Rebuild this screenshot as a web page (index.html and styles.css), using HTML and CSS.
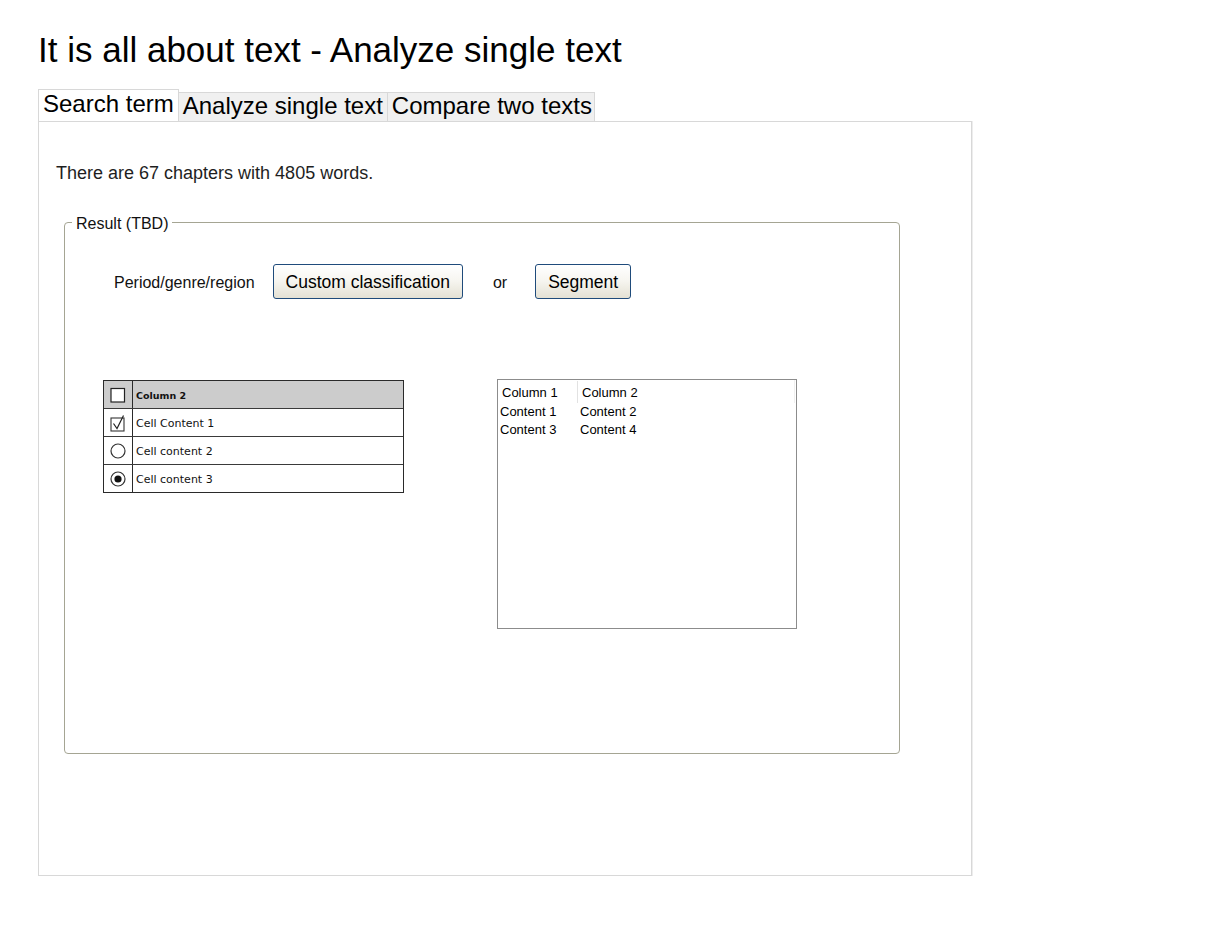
FILE: index.html
```html
<!DOCTYPE html>
<html>
<head>
<meta charset="utf-8">
<title>It is all about text</title>
<link rel="stylesheet" href="styles.css">
</head>
<body>
<div class="page">
  <h1 class="title">It is all about text - Analyze single text</h1>
  <div class="tabs">
    <div class="tab active">Search term</div>
    <div class="tab">Analyze single text</div>
    <div class="tab">Compare two texts</div>
  </div>
  <div class="panel">
    <p class="summary">There are 67 chapters with 4805 words.</p>
    <fieldset class="result">
      <legend class="result-legend">Result (TBD)</legend>
      <div class="controls">
        <span class="label">Period/genre/region</span>
        <button class="btn">Custom classification</button>
        <span class="or">or</span>
        <button class="btn">Segment</button>
      </div>
      <div class="tables">
        <div class="sketch">
          <div class="srow shead">
            <div class="sicon">
              <svg width="18" height="18" viewBox="0 0 18 18"><rect x="2" y="2.5" width="13.5" height="13.5" fill="#fff" stroke="#222" stroke-width="1.2"/></svg>
            </div>
            <div class="stext bold">Column 2</div>
          </div>
          <div class="srow">
            <div class="sicon">
              <svg width="18" height="20" viewBox="0 0 18 20"><rect x="2" y="5" width="13" height="13" fill="#fff" stroke="#333" stroke-width="1.1"/><path d="M4.5 10.5 L8 15.5 L14.5 2.5" fill="none" stroke="#222" stroke-width="1.2"/></svg>
            </div>
            <div class="stext">Cell Content 1</div>
          </div>
          <div class="srow">
            <div class="sicon">
              <svg width="18" height="18" viewBox="0 0 18 18"><circle cx="9" cy="9" r="7" fill="#fff" stroke="#333" stroke-width="1.2"/></svg>
            </div>
            <div class="stext">Cell content 2</div>
          </div>
          <div class="srow slast">
            <div class="sicon">
              <svg width="18" height="18" viewBox="0 0 18 18"><circle cx="9" cy="9" r="7" fill="#fff" stroke="#333" stroke-width="1.2"/><circle cx="9" cy="9" r="3.6" fill="#111"/></svg>
            </div>
            <div class="stext">Cell content 3</div>
          </div>
        </div>
        <div class="list">
          <div class="lhead">
            <div class="lhcell first">Column 1</div>
            <div class="lhcell">Column 2</div>
          </div>
          <div class="lrow">
            <div class="lcell first">Content 1</div>
            <div class="lcell">Content 2</div>
          </div>
          <div class="lrow">
            <div class="lcell first">Content 3</div>
            <div class="lcell">Content 4</div>
          </div>
        </div>
      </div>
    </fieldset>
  </div>
</div>
</body>
</html>
```
FILE: styles.css
```css
html, body {
  margin: 0;
  padding: 0;
  background: #fff;
}
body {
  font-family: "Liberation Sans", Arial, sans-serif;
  color: #000;
}
.page {
  padding: 30px 0 0 38px;
}
.title {
  margin: 0;
  font-size: 35px;
  line-height: 40px;
  font-weight: normal;
}
.tabs {
  display: flex;
  align-items: flex-end;
  margin-top: 19px;
  height: 32px;
}
.tab {
  font-size: 24px;
  line-height: 26px;
  padding: 0 4px 2px 4px;
  border: 1px solid #d8d8d8;
  border-bottom: none;
  background: #f0f0f0;
  margin-left: -1px;
}
.tab:last-child {
  padding-right: 2px;
}
.tab.active {
  margin-left: 0;
  background: #fff;
  line-height: 28px;
  padding-bottom: 3px;
}
.panel {
  box-sizing: border-box;
  width: 934px;
  height: 755px;
  border: 1px solid #d8d8d8;
  box-shadow: 1px 0 0 #ededed;
  padding: 41px 0 0 17px;
}
.summary {
  margin: 0;
  font-size: 18px;
  line-height: 21px;
  color: #1e1e1e;
}
.result {
  box-sizing: border-box;
  margin: 27px 0 0 8px;
  width: 836px;
  height: 543px;
  padding: 0;
  border: 1px solid #a5a593;
  border-radius: 4px;
  min-inline-size: 0;
}
.result-legend {
  margin-left: 7px;
  padding: 4px 4px 0 4px;
  font-size: 16px;
  line-height: 18px;
  color: #111;
}
.controls {
  display: flex;
  align-items: center;
  height: 35px;
  margin-top: 31px;
  padding-left: 49px;
  font-size: 16px;
  color: #111;
}
.label {
  margin-right: 18px;
  padding-top: 2px;
}
.btn {
  height: 35px;
  padding: 2px 12px 0 12px;
  font-family: "Liberation Sans", Arial, sans-serif;
  font-size: 17.5px;
  color: #000;
  border: 1px solid #1f4b7b;
  border-radius: 3px;
  background: linear-gradient(#ffffff, #f7f6f1 45%, #e4e1d4);
}
.or {
  margin: 0 28px 0 30px;
  padding-top: 2px;
}
.tables {
  display: flex;
  align-items: flex-start;
  margin-top: 80px;
  padding-left: 38px;
  gap: 93px;
}
.sketch {
  width: 301px;
  margin-top: 1px;
  border: 1px solid #2a2a2a;
  box-sizing: border-box;
  font-family: "DejaVu Sans", sans-serif;
  font-size: 11px;
  color: #111;
}
.srow {
  display: grid;
  grid-template-columns: 29px 1fr;
  height: 27px;
  border-bottom: 1px solid #3a3a3a;
}
.srow.slast {
  border-bottom: none;
}
.shead {
  background: #cccccc;
}
.sicon {
  border-right: 1px solid #2a2a2a;
  display: flex;
  align-items: center;
  justify-content: center;
}
.stext {
  display: flex;
  align-items: center;
  padding-left: 3px;
  padding-top: 2px;
}
.stext.bold {
  font-weight: bold;
  font-size: 9.5px;
}
.list {
  box-sizing: border-box;
  width: 300px;
  height: 250px;
  border: 1px solid #8c8c8c;
  font-size: 13px;
  color: #000;
}
.lhead {
  display: flex;
  height: 23px;
  line-height: 23px;
  padding-top: 1px;
  box-sizing: border-box;
  margin-right: 1px;
  border-right: 1px solid #f0f0f0;
}
.lhcell {
  padding-left: 4px;
}
.lhcell.first {
  width: 75px;
  border-right: 1px solid #e2e2e2;
}
.lhead .lhcell.first {
  height: 22px;
}
.lrow {
  display: flex;
  line-height: 18px;
}
.lrow:first-of-type {
  margin-top: 2px;
}
.lcell {
  padding-left: 2px;
}
.lcell.first {
  width: 78px;
  padding-right: 0;
}
```
